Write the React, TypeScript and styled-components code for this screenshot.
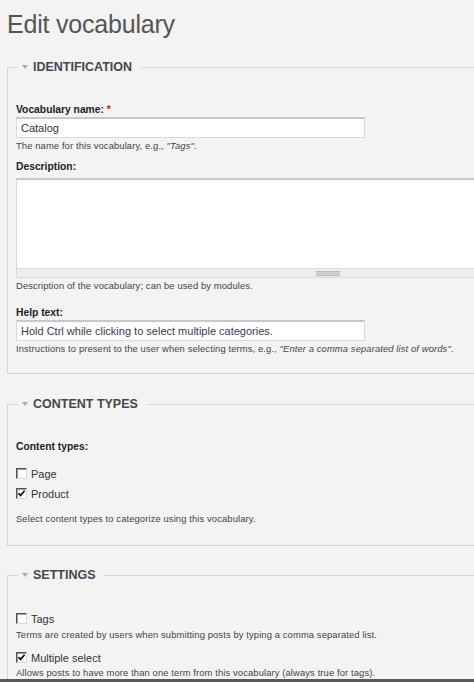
import React from "react";
import styled, { createGlobalStyle } from "styled-components";

const GlobalStyle = createGlobalStyle`
  html, body {
    margin: 0;
    padding: 0;
    background: #f3f3f3;
    overflow: hidden;
  }
  body {
    font-family: "Liberation Sans", Arial, sans-serif;
    color: #333;
  }
`;

const Frame = styled.div`
  height: 682px;
  display: flex;
  flex-direction: column;
  overflow: hidden;
`;

const Page = styled.div`
  flex: 1;
  overflow: hidden;
  padding-left: 7px;
  width: 641px;
`;

const FrameEdge = styled.div`
  height: 3px;
  background: #5a5a5a;
  flex-shrink: 0;
`;

const Title = styled.h1`
  margin: 9px 0 21px 0;
  font-size: 25px;
  line-height: 30px;
  font-weight: normal;
  color: #555;
  letter-spacing: -0.2px;
`;

const Fieldset = styled.fieldset<{ $bottom?: number; $after?: number }>`
  margin: 0 0 ${(p) => p.$after ?? 23}px 0;
  padding: 0 8px ${(p) => p.$bottom ?? 18}px 8px;
  border: 1px solid #d6d6d6;
  min-width: 0;
`;

const Legend = styled.legend`
  margin-left: 2px;
  padding: 0 9px 0 4px;
  display: flex;
  align-items: center;
  gap: 5px;
  height: 14px;
  font-size: 12.5px;
  line-height: 14px;
  font-weight: bold;
  color: #4b4450;
  text-transform: uppercase;
`;

const Arrow = styled.span`
  width: 0;
  height: 0;
  border-left: 3px solid transparent;
  border-right: 3px solid transparent;
  border-top: 4px solid #aaa;
`;

const Body = styled.div<{ $top: number }>`
  padding-top: ${(p) => p.$top}px;
`;

const Item = styled.div<{ $after?: number }>`
  margin-bottom: ${(p) => p.$after ?? 0}px;
`;

const Label = styled.label`
  display: block;
  font-size: 10.3px;
  line-height: 13px;
  font-weight: bold;
  color: #222;
`;

const Required = styled.span`
  color: #cc2222;
`;

const TextInput = styled.input<{ $tone?: string }>`
  display: block;
  box-sizing: border-box;
  width: 349px;
  height: 21px;
  margin-top: 1px;
  padding: 0 4px;
  border: 1px solid #dadada;
  border-top: 2px solid #c8c8c8;
  background: #fff;
  font-family: "Liberation Sans", Arial, sans-serif;
  font-size: 11px;
  color: ${(p) => p.$tone ?? "#333"};
  outline: none;
`;

const AreaBox = styled.div`
  margin-top: 5px;
  border: 1px solid #dadada;
  border-top: 2px solid #c8c8c8;
  background: #fff;
`;

const TextArea = styled.textarea`
  display: block;
  box-sizing: border-box;
  width: 100%;
  height: 88px;
  border: 0;
  resize: none;
  outline: none;
  background: #fff;
`;

const Grippie = styled.div`
  height: 8px;
  background: #eee;
  border-top: 1px solid #ddd;
  display: flex;
  align-items: center;
  justify-content: center;
`;

const GripHandle = styled.span`
  width: 24px;
  height: 3px;
  border-top: 1px solid #bbb;
  border-bottom: 1px solid #bbb;
  background: #d0d0d0;
`;

const Description = styled.div<{ $gap?: number }>`
  margin-top: ${(p) => p.$gap ?? 2}px;
  font-size: 9.4px;
  line-height: 12px;
  color: #444;
  letter-spacing: 0.12px;
`;

const CheckRow = styled.label`
  display: flex;
  align-items: center;
  gap: 4px;
  height: 20px;
  font-size: 11px;
  color: #333;
`;

const Box = styled.span`
  box-sizing: border-box;
  width: 11px;
  height: 11px;
  background: #fff;
  border-top: 1px solid #555;
  border-left: 1px solid #555;
  border-right: 1px solid #d8d8d8;
  border-bottom: 1px solid #d8d8d8;
  box-shadow: inset 1px 1px 0 #999;
  display: flex;
  align-items: center;
  justify-content: center;
  position: relative;
  top: -1px;
`;

const Checkbox: React.FC<{ checked?: boolean }> = ({ checked }) => (
  <Box>
    {checked && (
      <svg width="9" height="9" viewBox="0 0 9 9">
        <path d="M1.5 4.2 L3.5 6.4 L7.6 1.8" fill="none" stroke="#111" strokeWidth="1.7" />
      </svg>
    )}
  </Box>
);

const SectionLegend: React.FC<{ children: React.ReactNode }> = ({ children }) => (
  <Legend>
    <Arrow />
    {children}
  </Legend>
);

export default function App() {
  return (
    <Frame>
      <GlobalStyle />
      <Page>
        <Title>Edit vocabulary</Title>

        <Fieldset>
          <SectionLegend>Identification</SectionLegend>
          <Body $top={29}>
            <Item $after={8}>
              <Label>
                Vocabulary name: <Required>*</Required>
              </Label>
              <TextInput defaultValue="Catalog" />
              <Description>
                The name for this vocabulary, e.g., <em>"Tags"</em>.
              </Description>
            </Item>
            <Item $after={14}>
              <Label>Description:</Label>
              <AreaBox>
                <TextArea />
                <Grippie>
                  <GripHandle />
                </Grippie>
              </AreaBox>
              <Description>Description of the vocabulary; can be used by modules.</Description>
            </Item>
            <Item>
              <Label>Help text:</Label>
              <TextInput
                $tone="#45364f"
                defaultValue="Hold Ctrl while clicking to select multiple categories."
              />
              <Description>
                Instructions to present to the user when selecting terms, e.g.,{" "}
                <em>"Enter a comma separated list of words"</em>.
              </Description>
            </Item>
          </Body>
        </Fieldset>

        <Fieldset $bottom={20} $after={22}>
          <SectionLegend>Content types</SectionLegend>
          <Body $top={29}>
            <Item $after={11}>
              <Label>Content types:</Label>
            </Item>
            <CheckRow>
              <Checkbox />
              Page
            </CheckRow>
            <CheckRow>
              <Checkbox checked />
              Product
            </CheckRow>
            <Description $gap={9}>Select content types to categorize using this vocabulary.</Description>
          </Body>
        </Fieldset>

        <Fieldset>
          <SectionLegend>Settings</SectionLegend>
          <Body $top={27}>
            <Item $after={7}>
              <CheckRow>
                <Checkbox />
                Tags
              </CheckRow>
              <Description $gap={0}>
                Terms are created by users when submitting posts by typing a comma separated list.
              </Description>
            </Item>
            <Item>
              <CheckRow>
                <Checkbox checked />
                Multiple select
              </CheckRow>
              <Description $gap={-1}>
                Allows posts to have more than one term from this vocabulary (always true for tags).
              </Description>
            </Item>
          </Body>
        </Fieldset>
      </Page>
      <FrameEdge />
    </Frame>
  );
}
